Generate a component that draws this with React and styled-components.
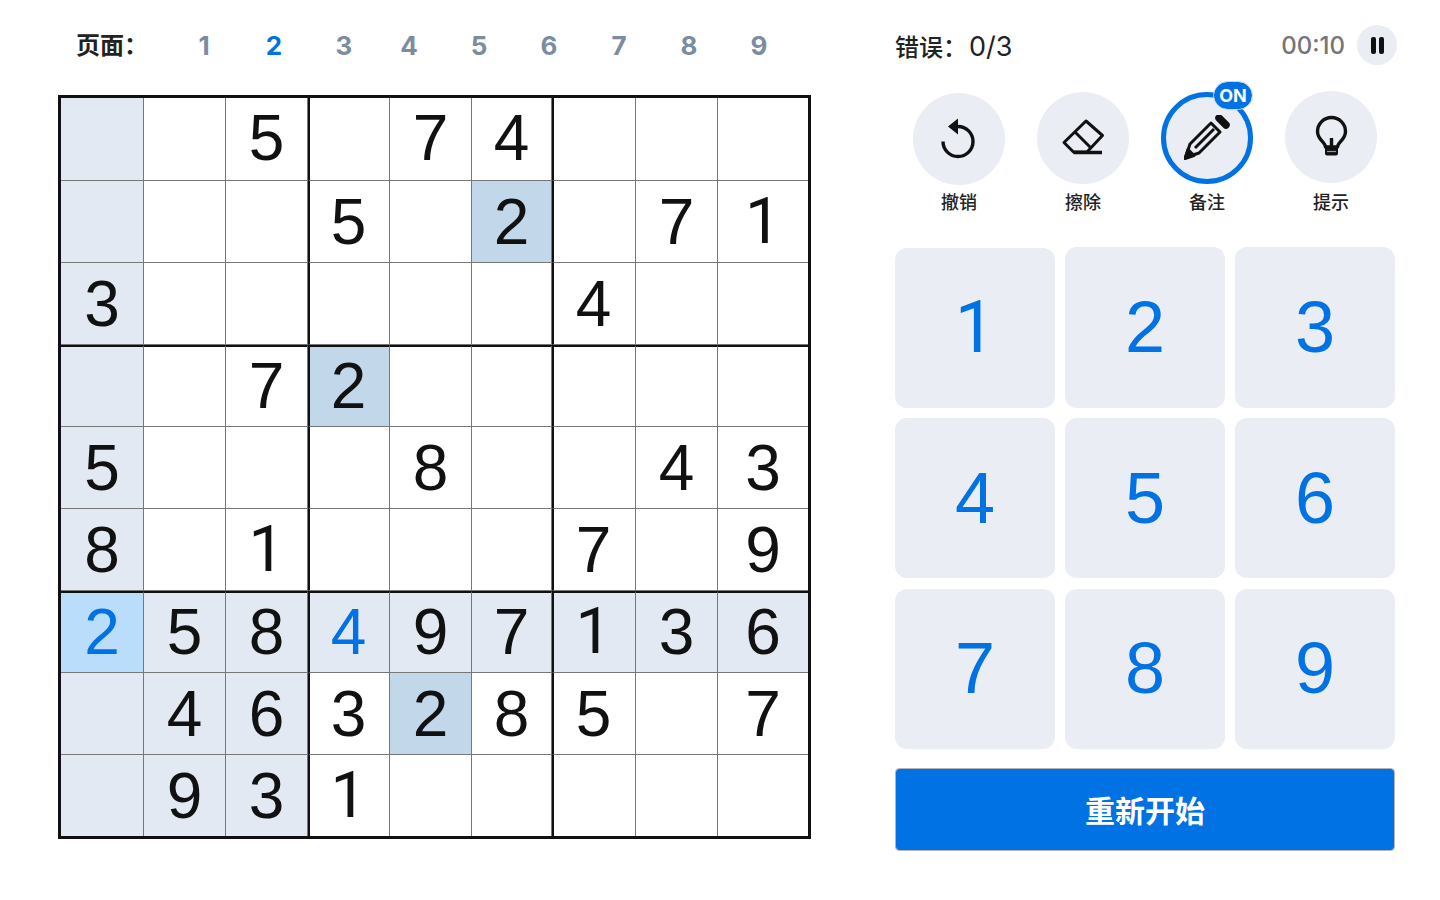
import React from "react";
import styled, { createGlobalStyle } from "styled-components";

const GlobalStyle = createGlobalStyle`
  html, body {
    margin: 0;
    padding: 0;
    background: #fff;
    color: #111;
    font-family: "Inter", "Noto Sans CJK SC", sans-serif;
  }
`;

const BLUE = "#0072e3";
const PANEL = "#eaedf4";
// the reference's "1" has no foot, Liberation's has one
const digitFont = (n) =>
  n === 1 ? `"Roboto", Arial, sans-serif` : `"Liberation Sans", Arial, sans-serif`;

const columns = [83, 82, 82, 82, 82, 80, 84, 82, 90];
const rowHeights = [83, 82, 82, 82, 82, 82, 82, 82, 81];

// 0 = empty
const puzzle = [
  [0, 0, 5, 0, 7, 4, 0, 0, 0],
  [0, 0, 0, 5, 0, 2, 0, 7, 1],
  [3, 0, 0, 0, 0, 0, 4, 0, 0],
  [0, 0, 7, 2, 0, 0, 0, 0, 0],
  [5, 0, 0, 0, 8, 0, 0, 4, 3],
  [8, 0, 1, 0, 0, 0, 7, 0, 9],
  [2, 5, 8, 4, 9, 7, 1, 3, 6],
  [0, 4, 6, 3, 2, 8, 5, 0, 7],
  [0, 9, 3, 1, 0, 0, 0, 0, 0],
];

const SELECTED = { row: 6, col: 0 };
const ENTERED = ["6-0", "6-3"];

const cellTone = (r, c) => {
  if (r === SELECTED.row && c === SELECTED.col) return "selected";
  if (puzzle[r][c] === puzzle[SELECTED.row][SELECTED.col]) return "same";
  const sameBox = r >= 6 && c <= 2;
  if (r === SELECTED.row || c === SELECTED.col || sameBox) return "peer";
  return "plain";
};

const tones = {
  selected: "#b9ddfb",
  same: "#c3d7eb",
  peer: "#e2e9f3",
  plain: "#fff",
};

const UndoIcon = () => (
  <svg width="40" height="44" viewBox="0 0 40 44" fill="none" stroke="#111" strokeWidth="3.400">
    <path d="M19 9.500A15 15 0 1 1 4 24.500" />
    <path d="M9 9.500 19 1.500V17.500Z" fill="#111" stroke="none" />
  </svg>
);

const EraserIcon = () => (
  <svg width="44" height="40" viewBox="0 0 44 40" fill="none" stroke="#111" strokeWidth="3" strokeLinejoin="round">
    <path d="M25 3 41.500 17.500 26 34H12.500L3 24.500Z" />
    <path d="M14 14 30 30" />
    <path d="M12.500 34.500H41" strokeWidth="3.500" />
  </svg>
);

const PencilIcon = () => (
  <svg width="46" height="46" viewBox="0 0 46 46" fill="none" stroke="#111" strokeWidth="3" strokeLinejoin="round">
    <path d="M1.500 42.500 6 29 27 8 36 17 15 38Z" />
    <path d="M11 33 30 14" strokeWidth="3" />
    <path d="M35 3 42 10" strokeWidth="7.500" strokeLinecap="round" />
    <path d="M1 43.500 4 34.500 10 40.500Z" fill="#111" />
  </svg>
);

const BulbIcon = () => (
  <svg width="40" height="44" viewBox="0 0 40 44" fill="none" stroke="#111" strokeWidth="3.400" strokeLinejoin="round">
    <path d="M14.500 32C14.500 27 6.500 25 6.500 16.500A14 14 0 0 1 34.500 16.500C34.500 25 26.500 27 26.500 32Z" />
    <path d="M20.500 23V32" />
    <path d="M14 32H27V38.500A2 2 0 0 1 25 40.500H16A2 2 0 0 1 14 38.500Z" fill="#111" stroke="none" />
    <path d="M16 36.500H25" strokeWidth="1.200" stroke="#9a9a9a" />
  </svg>
);

const App = () => {
  return (
    <Page>
      <GlobalStyle />
      <BoardColumn>
        <PageBar>
          <PageLabel>页面：</PageLabel>
          {[1, 2, 3, 4, 5, 6, 7, 8, 9].map((n) => (
            <PageLink key={n} $active={n === 2} $tight={n === 4}>
              {n}
            </PageLink>
          ))}
        </PageBar>
        <Board>
          {puzzle.map((row, r) =>
            row.map((value, c) => (
              <Cell
                key={`${r}-${c}`}
                $tone={cellTone(r, c)}
                $digit={value}
                $entered={ENTERED.includes(`${r}-${c}`)}
                $boxLeft={c === 3 || c === 6}
                $boxTop={r === 3 || r === 6}
                $first={r === 0}
              >
                {value !== 0 && value}
              </Cell>
            ))
          )}
        </Board>
      </BoardColumn>

      <Side>
        <StatusBar>
          <Mistakes>
            错误：<Score>0/3</Score>
          </Mistakes>
          <Timer>
            <Clock>00:10</Clock>
            <PauseButton aria-label="暂停">
              <PauseBar />
              <PauseBar />
            </PauseButton>
          </Timer>
        </StatusBar>

        <Tools>
          <Tool $lift={0}>
            <ToolCircle>
              <UndoIcon />
            </ToolCircle>
            <ToolLabel $lift={0}>撤销</ToolLabel>
          </Tool>
          <Tool $lift={1}>
            <ToolCircle>
              <EraserIcon />
            </ToolCircle>
            <ToolLabel $lift={1}>擦除</ToolLabel>
          </Tool>
          <Tool $lift={1}>
            <ToolCircle $on>
              <PencilIcon />
              <OnBadge>ON</OnBadge>
            </ToolCircle>
            <ToolLabel $lift={1}>备注</ToolLabel>
          </Tool>
          <Tool $lift={2}>
            <ToolCircle>
              <BulbIcon />
            </ToolCircle>
            <ToolLabel $lift={2}>提示</ToolLabel>
          </Tool>
        </Tools>

        <NumberPad>
          {[1, 2, 3, 4, 5, 6, 7, 8, 9].map((n) => (
            <NumberKey key={n} $digit={n} $lift={n === 2 || n === 3}>
              {n}
            </NumberKey>
          ))}
        </NumberPad>

        <RestartButton>重新开始</RestartButton>
      </Side>
    </Page>
  );
};

const Page = styled.div`
  display: flex;
  align-items: flex-start;
  gap: 84px;
  width: 1440px;
  height: 900px;
  padding-left: 58px;
  box-sizing: border-box;
  overflow: hidden;
`;

const BoardColumn = styled.div`
  width: 753px;
`;

const PageBar = styled.div`
  display: flex;
  align-items: center;
  height: 95px;
  padding: 0 0 4px 18px;
  box-sizing: border-box;
`;

const PageLabel = styled.span`
  width: 93px;
  margin-bottom: 5px;
  font-size: 24px;
  font-weight: 700;
  color: #222;
`;

const PageLink = styled.span`
  width: 70px;
  margin-left: ${(props) => (props.$tight ? "-5px" : "0")};
  text-align: center;
  font-size: 26px;
  font-weight: 700;
  color: ${(props) => (props.$active ? BLUE : "#7b8c9f")};
`;

const Board = styled.div`
  display: grid;
  grid-template-columns: ${columns.map((w) => `${w}px`).join(" ")};
  grid-template-rows: ${rowHeights.map((h) => `${h}px`).join(" ")};
  border: 3px solid #111;
`;

const Cell = styled.div`
  display: flex;
  align-items: center;
  justify-content: center;
  box-sizing: border-box;
  border-right: 1px solid #777;
  border-bottom: 1px solid #777;
  border-left: ${(props) => (props.$boxLeft ? "2px solid #111" : "0")};
  border-top: ${(props) => (props.$boxTop ? "2px solid #111" : "0")};
  padding-right: ${(props) => (props.$boxLeft ? "2px" : "0")};
  padding-bottom: ${(props) => (props.$boxTop || props.$first ? "2px" : "0")};
  background: ${(props) => tones[props.$tone]};
  color: ${(props) => (props.$entered ? BLUE : "#111")};
  font-family: ${(props) => digitFont(props.$digit)};
  font-size: 64px;

  &:nth-child(9n) {
    border-right: 0;
  }
  &:nth-last-child(-n + 9) {
    border-bottom: 0;
  }
`;

const Side = styled.div`
  display: flex;
  flex-direction: column;
  width: 500px;
`;

const StatusBar = styled.div`
  display: flex;
  align-items: center;
  justify-content: space-between;
  height: 90px;
`;

const Mistakes = styled.span`
  font-size: 24px;
  font-weight: 500;
  color: #222;
`;

const Score = styled.span`
  margin-left: 2px;
  font-size: 27px;
  font-weight: 400;
`;

const Timer = styled.div`
  display: flex;
  align-items: center;
  gap: 12px;
  margin-right: -2px;
`;

const Clock = styled.span`
  font-size: 24px;
  font-weight: 500;
  color: #757575;
`;

const PauseButton = styled.div`
  display: flex;
  align-items: center;
  justify-content: center;
  gap: 3px;
  width: 40px;
  height: 40px;
  border-radius: 50%;
  background: ${PANEL};
`;

const PauseBar = styled.span`
  width: 5px;
  height: 17px;
  border-radius: 2px;
  background: #111;
`;

const Tools = styled.div`
  display: flex;
  justify-content: space-between;
  height: 158px;
  padding: 0 18px;
`;

const Tool = styled.div`
  display: flex;
  flex-direction: column;
  align-items: center;
  width: 92px;
  margin-top: ${(props) => 3 - props.$lift}px;
`;

const ToolCircle = styled.div`
  position: relative;
  display: flex;
  align-items: center;
  justify-content: center;
  box-sizing: border-box;
  width: 92px;
  height: 92px;
  border-radius: 50%;
  background: ${PANEL};
  border: ${(props) => (props.$on ? `5px solid ${BLUE}` : "0")};
`;

const OnBadge = styled.span`
  position: absolute;
  top: -16px;
  right: -5px;
  box-sizing: border-box;
  width: 40px;
  height: 29px;
  text-align: center;
  line-height: 27px;
  border: 1px solid #c6d6e6;
  border-radius: 15px;
  background: ${BLUE};
  background-clip: padding-box;
  color: #fff;
  font-size: 18px;
  font-weight: 700;
`;

const ToolLabel = styled.span`
  margin-top: ${(props) => 8 + props.$lift}px;
  line-height: 20px;
  font-size: 18px;
  font-weight: 500;
  color: #222;
`;

const NumberPad = styled.div`
  display: grid;
  grid-template-columns: repeat(3, 160px);
  grid-auto-rows: 160px;
  gap: 10.400px 10px;
`;

const NumberKey = styled.div`
  display: flex;
  align-items: center;
  justify-content: center;
  padding-bottom: 1px;
  border-radius: 12px;
  background: ${PANEL};
  color: ${BLUE};
  font-family: ${(props) => digitFont(props.$digit)};
  font-size: 72px;
  margin-top: ${(props) => (props.$lift ? "-1px" : "0")};
`;

const RestartButton = styled.div`
  display: flex;
  align-items: center;
  justify-content: center;
  box-sizing: border-box;
  height: 83px;
  margin-top: 19px;
  padding-bottom: 1px;
  border: 1px solid #b5b5b5;
  border-radius: 4px;
  background: ${BLUE};
  background-clip: padding-box;
  color: #fff;
  font-size: 30px;
  font-weight: 700;
`;

export default App;
